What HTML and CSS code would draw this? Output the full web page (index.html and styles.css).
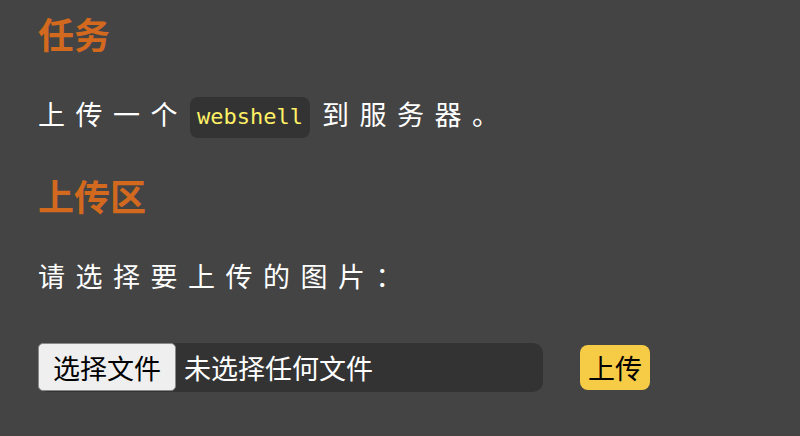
FILE: index.html
```html
<!DOCTYPE html>
<html lang="zh-CN">
<head>
    <meta charset="UTF-8">
    <meta name="viewport" content="width=device-width, initial-scale=1.0">
    <title>上传 webshell</title>
    <link rel="stylesheet" href="styles.css">
</head>
<body>
    <h2 class="title">任务</h2>
    <p class="text">上传一个<code>webshell</code>到服务器。</p>

    <h2 class="title title-upload">上传区</h2>
    <p class="text text-pick">请选择要上传的图片：</p>

    <form class="upload-form" onsubmit="return false;">
        <label class="file-picker">
            <span class="file-btn">选择文件</span>
            <span class="file-name">未选择任何文件</span>
        </label>
        <button type="submit" class="submit-btn">上传</button>
    </form>
</body>
</html>
```

FILE: styles.css
```css
body {
    margin: 0;
    padding: 12px 38px 0;
    background: #444444;
    color: #ffffff;
    font-family: "Noto Sans CJK SC", "Noto Sans", sans-serif;
}
.title {
    margin: 0;
    font-size: 36px;
    line-height: 42px;
    font-weight: bold;
    color: #d2691e;
}
.title-upload {
    margin-top: 36px;
}
.text {
    margin: 40px 0 0;
    font-size: 27px;
    line-height: 40px;
    letter-spacing: 10.5px;
}
.text-pick {
    margin-top: 40px;
}
code {
    display: inline-block;
    vertical-align: middle;
    margin: -1px 12px 0 2px;
    padding: 7px 7px 8px;
    background: #333333;
    border-radius: 8px;
    color: #fff066;
    font-family: "DejaVu Sans Mono", monospace;
    font-size: 22px;
    line-height: 26px;
    letter-spacing: 0;
}
.upload-form {
    display: flex;
    align-items: center;
    gap: 37px;
    margin-top: 47px;
}
.file-picker {
    display: flex;
    align-items: center;
    width: 505px;
    height: 49px;
    background: #333333;
    border-radius: 10px;
    font-size: 27px;
}
.file-btn {
    display: flex;
    align-items: center;
    justify-content: center;
    box-sizing: border-box;
    width: 138px;
    height: 48px;
    background: #efefef;
    border: 1px solid #8a8a8a;
    border-radius: 5px;
    color: #000000;
}
.file-name {
    margin-left: 8px;
    color: #ffffff;
}
.submit-btn {
    width: 70px;
    height: 45px;
    padding: 0;
    border: none;
    border-radius: 8px;
    background: #f6cb45;
    color: #000000;
    font-family: "Noto Sans CJK SC", "Noto Sans", sans-serif;
    font-size: 27px;
}
```
